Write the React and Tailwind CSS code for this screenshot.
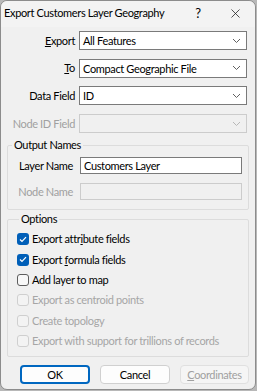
import { X } from 'lucide-react';

const FONT = { fontFamily: 'Lato, "Liberation Sans", sans-serif' };

function Chevron({ disabled }) {
  return (
    <svg width="9" height="6" viewBox="0 0 9 6" className="shrink-0">
      <path d="M1 1 L4.5 4.5 L8 1" fill="none" stroke={disabled ? '#b8b8b8' : '#606060'} strokeWidth="1" />
    </svg>
  );
}

function Combo({ value, disabled }) {
  return (
    <div className={`h-[19px] w-[168px] flex items-center justify-between pl-[3px] pr-[5px] border ${disabled ? 'bg-[#f0f0f0] border-[#cccccc]' : 'bg-white border-[#7a7a7a]'}`}>
      <span className="text-[#000] leading-none whitespace-nowrap">{value}</span>
      <Chevron disabled={disabled} />
    </div>
  );
}

function Row({ label, children, disabled }) {
  return (
    <div className="flex items-center">
      <div className={`w-[76px] text-right pr-[4px] whitespace-nowrap ${disabled ? 'text-[#a0a0a0]' : 'text-black'}`}>{label}</div>
      {children}
    </div>
  );
}

function Check({ checked, disabled, children }) {
  return (
    <div className="flex items-center h-[20.4px]">
      {checked ? (
        <div className="w-[12px] h-[12px] rounded-[3px] bg-[#005fb8] flex items-center justify-center">
          <svg width="8" height="7" viewBox="0 0 8 7">
            <path d="M1 3.5 L3 5.5 L7 1.2" fill="none" stroke="white" strokeWidth="1.2" />
          </svg>
        </div>
      ) : (
        <div className={`w-[12px] h-[12px] rounded-[3px] border ${disabled ? 'border-[#cfcfcf] bg-[#f3f3f3]' : 'border-[#5d5d5d] bg-[#f8f8f8]'}`} />
      )}
      <span className={`ml-[3px] whitespace-nowrap ${disabled ? 'text-[#a6a6a6]' : 'text-black'}`}>{children}</span>
    </div>
  );
}

export default function App() {
  return (
    <div className="w-[257px] h-[391px] bg-[#b8b8b8] text-[11px] leading-[16px] tracking-[-0.35px] overflow-hidden" style={FONT}>
      <div className="w-[256px] h-[390px] bg-[#f0f0f0] border border-[#8c8c8c] rounded-[7px] flex flex-col">
        {/* title bar */}
        <div className="h-[26px] shrink-0 flex items-center pl-[3px] pr-[8px] rounded-t-[7px] bg-[#f3f3f3]">
          <span className="text-black flex-1 -mt-[2px] whitespace-nowrap">Export Customers Layer Geography</span>
          <span className="w-[16px] text-center mr-[22px] -mt-[2px] text-[13px]">?</span>
          <X size={15} strokeWidth={1.2} className="text-[#1a1a1a] mr-[4px] -mt-[1px]" />
        </div>

        <div className="flex flex-col gap-[8.7px] mt-[4px] pl-[2px]">
          <Row label={<span><u>E</u>xport</span>}><Combo value="All Features" /></Row>
          <Row label={<span><u>T</u>o</span>}><Combo value="Compact Geographic File" /></Row>
          <Row label="Data Field"><Combo value="ID" /></Row>
          <Row label="Node ID Field" disabled><Combo value="" disabled /></Row>
        </div>

        <fieldset className="mx-[6px] mt-[4px] border border-[#dcdcdc] rounded-[2px] pb-[9px]">
          <legend className="ml-[4px] px-[2px] text-black">Output Names</legend>
          <div className="flex flex-col gap-[9px] mt-[4px]">
            <div className="flex items-center">
              <div className="w-[72px] text-right pr-[7px] whitespace-nowrap">Layer Name</div>
              <div className="h-[17px] w-[162px] bg-white border border-[#7a7a7a] pl-[3px] flex items-center">Customers Layer</div>
            </div>
            <div className="flex items-center">
              <div className="w-[72px] text-right pr-[7px] text-[#a0a0a0] whitespace-nowrap">Node Name</div>
              <div className="h-[17px] w-[162px] bg-[#f0f0f0] border border-[#cccccc]" />
            </div>
          </div>
        </fieldset>

        <fieldset className="mx-[6px] mt-[1px] border border-[#dcdcdc] rounded-[2px] pl-[9px] pb-[5px]">
          <legend className="ml-[2px] px-[2px] text-black">Options</legend>
          <div className="flex flex-col mt-[2px]">
            <Check checked>Export attr<u>i</u>bute fields</Check>
            <Check checked>Export <u>f</u>ormula fields</Check>
            <Check>Add layer to map</Check>
            <Check disabled>Export as centroid points</Check>
            <Check disabled>Create topology</Check>
            <Check disabled>Export with support for trillions of records</Check>
          </div>
        </fieldset>

        <div className="flex gap-[10px] mt-[8px] pl-[19px]">
          <button className="w-[70px] h-[19px] rounded-[4px] border-2 border-[#0067c0] bg-[#fdfdfd] text-black leading-none">OK</button>
          <button className="w-[70px] h-[19px] rounded-[4px] border border-[#d0d0d0] bg-[#fdfdfd] text-black leading-none">Cancel</button>
          <button className="w-[69px] h-[19px] rounded-[4px] border border-[#e0e0e0] bg-[#f5f5f5] text-[#a0a0a0] leading-none"><u>C</u>oordinates</button>
        </div>
      </div>
    </div>
  );
}
